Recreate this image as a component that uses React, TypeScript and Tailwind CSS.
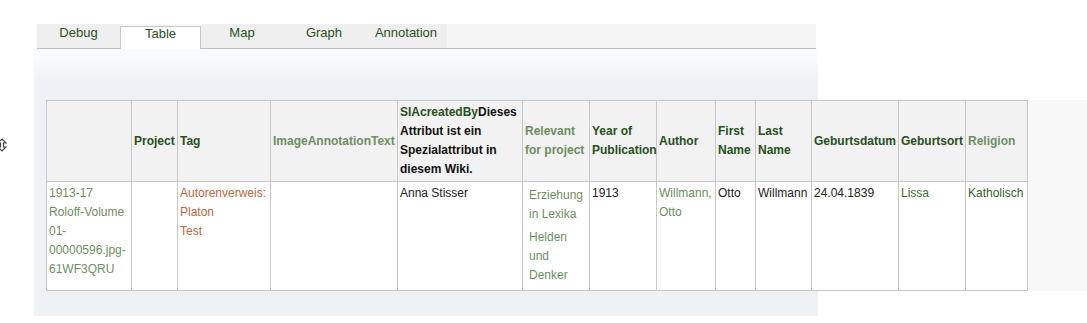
import React from "react";

const DG = "text-[#28501c]"; // dark green header
const SG = "text-[#6d8f62]"; // sage green

export default function App() {
  const th = "border border-[#c8c8c8] bg-[#f2f2f2] px-[2px] py-[2px] text-left align-middle font-bold leading-[19px]";
  const td = "border border-[#c8c8c8] bg-white px-[2px] py-[2px] text-left align-top font-normal leading-[19px]";
  return (
    <div className="relative h-[323px] w-[1087px] overflow-hidden bg-white font-['Liberation_Sans',Arial,sans-serif] text-[12px] text-[#222]">
      <svg className="absolute left-[-3px] top-[138px]" width="10" height="14" viewBox="0 0 10 14" fill="none" stroke="#444" strokeWidth="1.2">
        <path d="M5 1 L9 5 H6.5 V9 H9 L5 13 L1 9 H3.5 V5 H1 Z" />
      </svg>
      <div className="pt-6 pl-[34px]">
        <div className="w-[784px]">
          <div className="ml-[3px] flex h-[25px] w-[779px] items-end border-b border-[#bcbcbc] bg-[#f5f5f5] text-[13px] text-[#2c4f1e]">
            <div className="h-[24px] w-[83px] bg-[#efefef] pt-[2px] text-center leading-[14px]">Debug</div>
            <div className="relative mb-[-1px] h-[23px] w-[81px] border-x border-t border-[#c8c8c8] bg-white text-center leading-[14px]">Table</div>
            <div className="h-[24px] w-[82px] bg-[#efefef] pt-[2px] text-center leading-[14px]">Map</div>
            <div className="h-[24px] w-[82px] bg-[#efefef] pt-[2px] text-center leading-[14px]">Graph</div>
            <div className="h-[24px] w-[82px] bg-[#efefef] pt-[2px] text-center leading-[14px]">Annotation</div>
          </div>
          <div className="h-[267px] bg-linear-to-b from-[#f9fafb] from-[4%] to-[#eff2f4] to-[12%] pl-[12px] pt-[51px]">
            <div className="w-[1041px] bg-[#f8f8f8]">
              <table className="w-[981px] table-fixed border-collapse">
                <colgroup>
                  <col className="w-[85px]" />
                  <col className="w-[46px]" />
                  <col className="w-[93px]" />
                  <col className="w-[127px]" />
                  <col className="w-[125px]" />
                  <col className="w-[67px]" />
                  <col className="w-[67px]" />
                  <col className="w-[59px]" />
                  <col className="w-[40px]" />
                  <col className="w-[56px]" />
                  <col className="w-[87px]" />
                  <col className="w-[67px]" />
                  <col className="w-[62px]" />
                </colgroup>
                <thead>
                  <tr>
                    <th className={th}></th>
                    <th className={`${th} ${DG}`}>Project</th>
                    <th className={`${th} ${DG}`}>Tag</th>
                    <th className={`${th} ${SG} whitespace-nowrap`}>ImageAnnotationText</th>
                    <th className={`${th} whitespace-nowrap text-[#111]`}>
                      <span className={DG}>SIAcreatedBy</span>Dieses<br />Attribut ist ein<br />Spezialattribut in<br />diesem Wiki.
                    </th>
                    <th className={`${th} ${SG} whitespace-nowrap`}>Relevant<br />for project</th>
                    <th className={`${th} ${DG} whitespace-nowrap`}>Year of<br />Publication</th>
                    <th className={`${th} ${DG}`}>Author</th>
                    <th className={`${th} ${DG}`}>First<br />Name</th>
                    <th className={`${th} ${DG}`}>Last<br />Name</th>
                    <th className={`${th} ${DG}`}>Geburtsdatum</th>
                    <th className={`${th} ${DG}`}>Geburtsort</th>
                    <th className={`${th} ${SG}`}>Religion</th>
                  </tr>
                </thead>
                <tbody>
                  <tr>
                    <td className={`${td} ${SG} whitespace-nowrap`}>1913-17<br />Roloff-Volume<br />01-<br />00000596.jpg-<br />61WF3QRU</td>
                    <td className={td}></td>
                    <td className={`${td} whitespace-nowrap text-[#b96a3d]`}>Autorenverweis:<br />Platon<br />Test</td>
                    <td className={td}></td>
                    <td className={td}>Anna Stisser</td>
                    <td className={`${td} ${SG} whitespace-nowrap`}>
                      <div className="mb-[4px] ml-[4px] mt-[2px]">Erziehung<br />in Lexika</div>
                      <div className="mb-[3px] ml-[4px]">Helden<br />und<br />Denker</div>
                    </td>
                    <td className={td}>1913</td>
                    <td className={`${td} ${SG} whitespace-nowrap`}>Willmann,<br />Otto</td>
                    <td className={td}>Otto</td>
                    <td className={td}>Willmann</td>
                    <td className={td}>24.04.1839</td>
                    <td className={`${td} text-[#3b6b30]`}>Lissa</td>
                    <td className={`${td} text-[#365f2d]`}>Katholisch</td>
                  </tr>
                </tbody>
              </table>
            </div>
          </div>
        </div>
      </div>
    </div>
  );
}
